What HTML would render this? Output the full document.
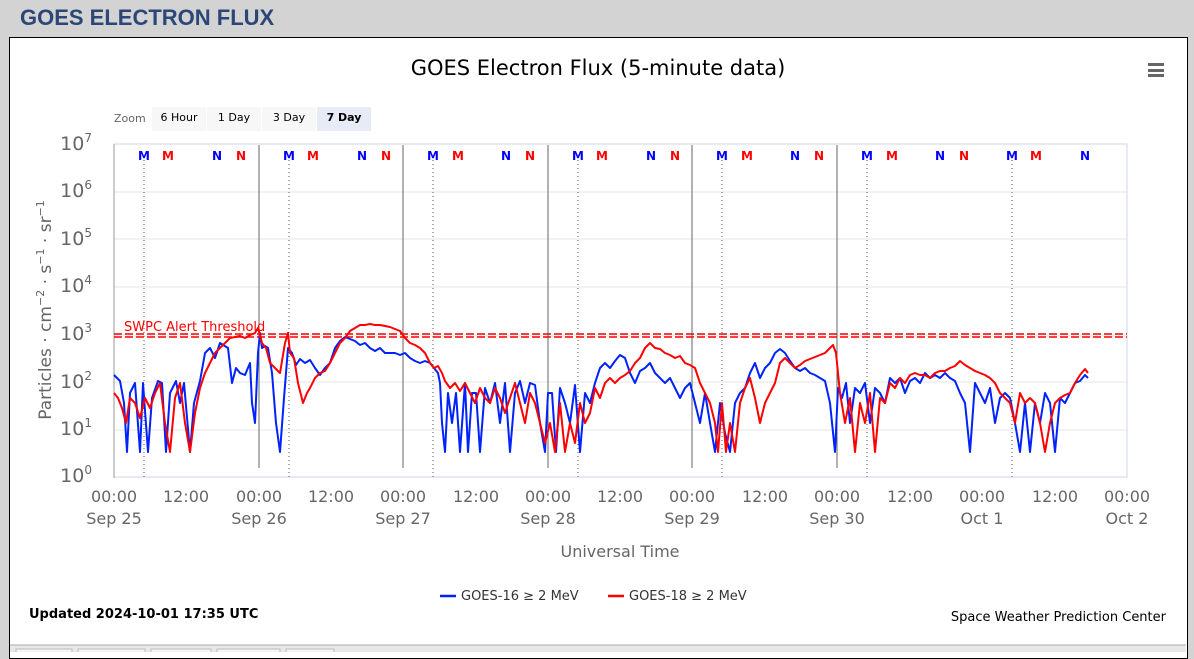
<!DOCTYPE html>
<html><head><meta charset="utf-8"><style>
body{margin:0;background:#d3d3d3;width:1194px;height:652px;overflow:hidden;font-family:"DejaVu Sans","Liberation Sans",sans-serif;position:relative}
h1{position:absolute;left:20px;top:5px;margin:0;font:bold 22px "Liberation Sans",sans-serif;color:#2b4677}
#panel{position:absolute;left:9px;top:37px;width:1177px;height:620px;background:#fff;border:1px solid #000}
svg text{font-family:"DejaVu Sans",sans-serif}
</style></head><body>
<h1>GOES ELECTRON FLUX</h1>
<div id="panel"></div>
<svg width="1194" height="652" style="position:absolute;left:0;top:0">
<text x="598" y="75" text-anchor="middle" font-size="21" fill="#000">GOES Electron Flux (5-minute data)</text>
<g fill="#666"><rect x="1148" y="63" width="16" height="3"/><rect x="1148" y="69" width="16" height="3"/><rect x="1148" y="74" width="16" height="3"/></g>
<text x="114" y="122" font-size="11" fill="#666">Zoom</text>
<rect x="152" y="107" width="54" height="24" fill="#f7f7f7"/><text x="179" y="121" font-size="11" text-anchor="middle">6 Hour</text>
<rect x="207" y="107" width="54" height="24" fill="#f7f7f7"/><text x="234" y="121" font-size="11" text-anchor="middle">1 Day</text>
<rect x="262" y="107" width="54" height="24" fill="#f7f7f7"/><text x="289" y="121" font-size="11" text-anchor="middle">3 Day</text>
<rect x="317" y="107" width="54" height="24" fill="#e6ebf5"/><text x="344" y="121" font-size="11" text-anchor="middle" font-weight="bold">7 Day</text>
<g stroke="#e6e6e6"><line x1="114" x2="1127" y1="192" y2="192"/><line x1="114" x2="1127" y1="239" y2="239"/><line x1="114" x2="1127" y1="287" y2="287"/><line x1="114" x2="1127" y1="335" y2="335"/><line x1="114" x2="1127" y1="382" y2="382"/><line x1="114" x2="1127" y1="430" y2="430"/></g>
<rect x="114" y="144" width="1013" height="333" fill="none" stroke="#ccd6eb"/>
<line x1="114" x2="114" y1="144" y2="478" stroke="#999"/>
<g stroke="#666"><line x1="259" x2="259" y1="145" y2="468"/><line x1="403" x2="403" y1="145" y2="468"/><line x1="548" x2="548" y1="145" y2="468"/><line x1="692" x2="692" y1="145" y2="468"/><line x1="837" x2="837" y1="145" y2="468"/></g>
<g stroke="#555" stroke-dasharray="1,3"><line x1="144" x2="144" y1="160" y2="477"/><line x1="289" x2="289" y1="160" y2="477"/><line x1="433" x2="433" y1="160" y2="477"/><line x1="578" x2="578" y1="160" y2="477"/><line x1="722" x2="722" y1="160" y2="477"/><line x1="867" x2="867" y1="160" y2="477"/><line x1="1012" x2="1012" y1="160" y2="477"/></g>
<g font-size="12" font-weight="bold" text-anchor="middle">
<g fill="#00f"><text x="144" y="160">M</text><text x="217" y="160">N</text><text x="289" y="160">M</text><text x="362" y="160">N</text><text x="433" y="160">M</text><text x="506" y="160">N</text><text x="578" y="160">M</text><text x="651" y="160">N</text><text x="722" y="160">M</text><text x="795" y="160">N</text><text x="867" y="160">M</text><text x="940" y="160">N</text><text x="1012" y="160">M</text><text x="1085" y="160">N</text></g>
<g fill="#f00"><text x="168" y="160">M</text><text x="241" y="160">N</text><text x="313" y="160">M</text><text x="386" y="160">N</text><text x="458" y="160">M</text><text x="530" y="160">N</text><text x="602" y="160">M</text><text x="675" y="160">N</text><text x="747" y="160">M</text><text x="819" y="160">N</text><text x="892" y="160">M</text><text x="964" y="160">N</text><text x="1036" y="160">M</text></g>
</g>
<g fill="#666" font-size="19" text-anchor="end">
<text x="92" y="150">10<tspan font-size="12" dy="-8">7</tspan></text>
<text x="92" y="197">10<tspan font-size="12" dy="-8">6</tspan></text>
<text x="92" y="245">10<tspan font-size="12" dy="-8">5</tspan></text>
<text x="92" y="292">10<tspan font-size="12" dy="-8">4</tspan></text>
<text x="92" y="340">10<tspan font-size="12" dy="-8">3</tspan></text>
<text x="92" y="388">10<tspan font-size="12" dy="-8">2</tspan></text>
<text x="92" y="435">10<tspan font-size="12" dy="-8">1</tspan></text>
<text x="92" y="482">10<tspan font-size="12" dy="-8">0</tspan></text>
</g>
<text transform="translate(51,310) rotate(-90)" text-anchor="middle" font-size="17" fill="#666">Particles · cm<tspan font-size="11" dy="-7">−2</tspan><tspan dy="7"> · s</tspan><tspan font-size="11" dy="-7">−1</tspan><tspan dy="7"> · sr</tspan><tspan font-size="11" dy="-7">−1</tspan></text>
<g fill="#666" font-size="16" text-anchor="middle">
<text x="114" y="502">00:00</text><text x="186" y="502">12:00</text><text x="259" y="502">00:00</text><text x="331" y="502">12:00</text><text x="403" y="502">00:00</text><text x="476" y="502">12:00</text><text x="548" y="502">00:00</text><text x="620" y="502">12:00</text><text x="692" y="502">00:00</text><text x="765" y="502">12:00</text><text x="837" y="502">00:00</text><text x="910" y="502">12:00</text><text x="982" y="502">00:00</text><text x="1055" y="502">12:00</text><text x="1127" y="502">00:00</text>
<text x="114" y="524">Sep 25</text><text x="259" y="524">Sep 26</text><text x="403" y="524">Sep 27</text><text x="548" y="524">Sep 28</text><text x="692" y="524">Sep 29</text><text x="837" y="524">Sep 30</text><text x="982" y="524">Oct 1</text><text x="1127" y="524">Oct 2</text>
<text x="620" y="557">Universal Time</text>
</g>
<line x1="114" x2="1127" y1="334" y2="334" stroke="#f00" stroke-width="1.5" stroke-dasharray="8,3"/>
<line x1="114" x2="1127" y1="337" y2="337" stroke="#f00" stroke-width="1.5" stroke-dasharray="8,3"/>
<text x="124" y="331" font-size="13" fill="#f00">SWPC Alert Threshold</text>
<g transform="translate(0,3)" fill="none" stroke-width="2" stroke-linejoin="round">
<polyline stroke="#0022ff" points="114,372 120,378 124,400 127,449 130,390 135,380 140,449 143,380 148,449 152,395 158,378 162,380 166,449 170,390 176,378 180,400 184,380 190,449 194,400 200,378 205,350 210,345 215,355 220,340 228,345 232,380 236,365 240,370 245,372 250,360 252,400 255,420 258,350 260,330 262,345 265,343 268,345 272,370 276,420 280,449 284,395 288,345 292,350 296,362 300,356 305,360 310,357 315,365 320,372 325,365 330,360 335,345 340,338 345,334 350,336 355,338 360,342 365,340 370,345 375,348 380,345 385,350 395,350 400,352 405,350 410,355 415,358 420,360 425,358 430,360 434,365 438,370 440,380 442,420 445,449 448,390 452,420 456,390 460,449 465,380 468,449 472,390 476,390 480,449 485,385 490,400 495,380 500,420 505,380 510,449 515,390 520,378 525,400 530,380 535,382 540,420 545,449 548,390 552,390 556,449 560,385 565,400 570,420 575,382 580,449 585,390 590,400 595,380 600,365 605,360 610,365 615,358 620,352 625,355 630,370 635,380 640,368 645,365 650,360 655,370 660,375 665,380 670,375 675,385 680,395 685,385 690,380 695,400 700,420 705,390 710,420 715,449 720,400 725,430 730,449 735,400 740,390 745,385 750,370 755,360 760,375 765,365 770,360 775,350 780,346 785,350 790,358 795,365 800,368 805,365 810,370 815,372 820,375 825,378 830,400 835,449 838,385 842,395 846,380 850,420 855,385 860,390 865,380 870,420 875,385 880,390 885,400 890,375 895,380 900,375 905,390 910,378 915,375 920,380 925,370 930,375 935,372 940,375 945,370 950,375 955,378 960,390 965,400 970,449 975,380 980,390 985,400 990,385 995,420 1000,395 1005,390 1010,395 1015,420 1020,449 1025,400 1030,449 1035,400 1040,420 1045,390 1050,400 1055,449 1060,395 1065,400 1070,390 1075,380 1080,378 1085,372 1088,375"/>
<polyline stroke="#ff0000" points="114,390 118,395 122,405 126,420 130,395 135,400 140,415 145,395 150,405 155,390 160,380 165,420 170,449 175,395 180,380 185,420 190,449 195,410 200,385 205,370 210,360 215,350 220,345 225,340 230,335 235,334 240,333 245,335 250,332 255,330 258,325 262,340 266,345 270,360 275,365 280,370 285,340 288,330 290,350 294,355 298,380 303,400 307,390 310,385 315,375 320,370 325,368 330,360 335,350 340,340 345,335 350,328 355,325 360,322 365,322 370,321 375,322 380,322 385,323 390,324 395,326 400,328 405,335 410,340 415,342 420,345 425,350 430,360 434,365 438,363 442,370 445,378 450,385 455,380 460,388 465,380 470,390 475,400 480,385 485,395 490,400 495,385 500,395 505,410 510,395 515,380 520,400 525,420 530,390 535,400 540,420 545,440 550,420 555,449 560,400 565,449 570,420 575,440 580,400 585,420 590,410 595,385 600,395 605,380 610,375 615,380 620,375 625,372 630,368 635,360 640,355 645,345 650,340 655,345 660,346 665,350 670,352 675,355 680,353 685,360 690,362 695,365 700,380 705,390 710,400 715,420 718,449 722,400 726,449 730,420 735,449 740,400 745,385 750,375 755,395 760,420 765,400 770,390 775,380 780,360 785,355 790,360 795,365 800,362 805,358 810,356 815,354 820,352 825,350 830,345 833,342 836,350 840,390 845,420 850,395 855,449 860,400 865,420 870,390 875,449 880,395 885,400 890,380 895,385 900,375 905,380 910,372 915,370 920,372 925,372 930,375 935,370 940,368 945,368 950,365 955,363 960,358 965,362 970,365 975,368 980,370 985,372 990,375 995,380 1000,390 1005,395 1010,400 1015,420 1020,390 1025,400 1030,395 1035,400 1040,420 1045,449 1050,420 1055,400 1060,395 1065,392 1070,390 1075,380 1080,372 1085,366 1088,370"/>
</g>
<line x1="440" x2="456" y1="596" y2="596" stroke="#0022ff" stroke-width="2.5"/>
<text x="461" y="600" font-size="13" fill="#333">GOES-16 ≥ 2 MeV</text>
<line x1="608" x2="624" y1="596" y2="596" stroke="#f00" stroke-width="2.5"/>
<text x="629" y="600" font-size="13" fill="#333">GOES-18 ≥ 2 MeV</text>
<text x="29" y="618" font-size="13" font-weight="bold" fill="#000">Updated 2024-10-01 17:35 UTC</text>
<text x="1166" y="621" font-size="13" fill="#000" text-anchor="end">Space Weather Prediction Center</text>
<rect x="10" y="645" width="1176" height="7" fill="#e8e8e8"/>
<line x1="10" x2="1186" y1="645" y2="645" stroke="#aaa"/>
<g fill="#f4f4f4" stroke="#bbb"><rect x="16" y="649" width="56" height="6"/><rect x="78" y="649" width="67" height="6"/><rect x="151" y="649" width="60" height="6"/><rect x="217" y="649" width="63" height="6"/><rect x="286" y="649" width="48" height="6"/></g>
</svg>
</body></html>
